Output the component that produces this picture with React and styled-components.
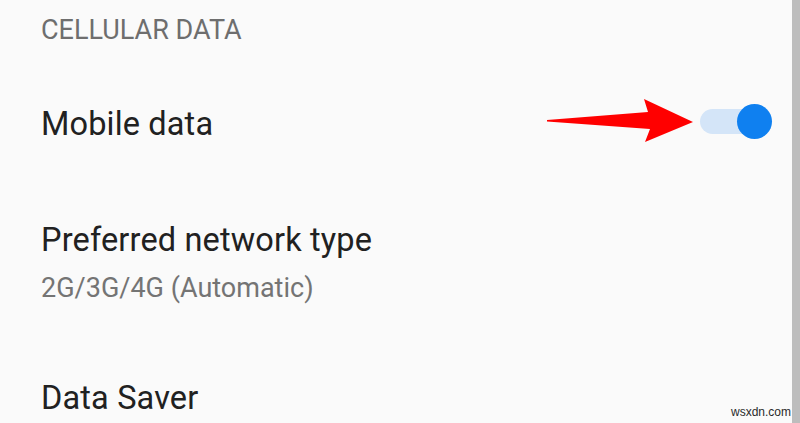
import React from "react";
import styled, { createGlobalStyle } from "styled-components";

const GlobalStyle = createGlobalStyle`
  html, body {
    margin: 0;
    padding: 0;
    background: #fafafa;
  }
  body {
    font-family: Roboto, "Noto Sans", Arial, sans-serif;
    overflow: hidden;
  }
`;

const Screen = styled.div`
  position: relative;
  display: flex;
  width: 800px;
  height: 423px;
  overflow: hidden;
  background: #fafafa;
`;

const List = styled.div`
  flex: 1;
  display: flex;
  flex-direction: column;
  padding-left: 41px;
  padding-right: 20px;
`;

const ScrollEdge = styled.div`
  width: 8px;
  flex-shrink: 0;
  background: #bdbdbd;
`;

const Header = styled.div`
  padding: 10px 0 22px;
  font-size: 27px;
  line-height: 40px;
  color: #6e6e6e;
`;

const Row = styled.div`
  display: flex;
  align-items: center;
  justify-content: space-between;
  padding: ${(p) => p.$pad || "32px 0"};
`;

const Texts = styled.div`
  display: flex;
  flex-direction: column;
  gap: 8px;
`;

const Title = styled.div`
  font-size: 32.5px;
  line-height: 40px;
  letter-spacing: 0.15px;
  color: #212121;
`;

const Summary = styled.div`
  font-size: 27px;
  line-height: 40px;
  color: #747474;
`;

const SwitchWrap = styled.div`
  position: relative;
  width: 72px;
  height: 36px;
  margin-top: -4px;
`;

const Track = styled.div`
  position: absolute;
  left: 0;
  top: 5px;
  width: 60px;
  height: 25px;
  border-radius: 13px;
  background: ${(p) => (p.$on ? "#d4e5f8" : "#cfcfcf")};
`;

const Thumb = styled.div`
  position: absolute;
  top: 0;
  left: ${(p) => (p.$on ? "37px" : "0")};
  width: 35px;
  height: 35px;
  border-radius: 50%;
  background: ${(p) => (p.$on ? "#0f80f0" : "#f1f1f1")};
`;

const Pointer = styled.svg`
  position: absolute;
  right: 100%;
  top: -6px;
  margin-right: 5px;
`;

const Watermark = styled.div`
  position: absolute;
  right: 9px;
  bottom: 4px;
  font-family: "Liberation Sans", Arial, sans-serif;
  font-size: 12px;
  color: #2a2a2a;
`;

const Arrow = () => (
  <Pointer width="150" height="46" viewBox="0 0 150 46">
    <polygon
      points="2,22 103,14 99,1 148,24 100,44 105,31 2,23.5"
      fill="#ff0000"
    />
  </Pointer>
);

const Switch = ({ on }) => (
  <SwitchWrap>
    <Track $on={on} />
    <Thumb $on={on} />
    <Arrow />
  </SwitchWrap>
);

export default function App() {
  return (
    <>
      <GlobalStyle />
      <Screen>
        <List>
          <Header>CELLULAR DATA</Header>
          <Row>
            <Title>Mobile data</Title>
            <Switch on />
          </Row>
          <Row $pad="44px 0 38px">
            <Texts>
              <Title>Preferred network type</Title>
              <Summary>2G/3G/4G (Automatic)</Summary>
            </Texts>
          </Row>
          <Row $pad="32px 0">
            <Title>Data Saver</Title>
          </Row>
        </List>
        <ScrollEdge />
        <Watermark>wsxdn.com</Watermark>
      </Screen>
    </>
  );
}
